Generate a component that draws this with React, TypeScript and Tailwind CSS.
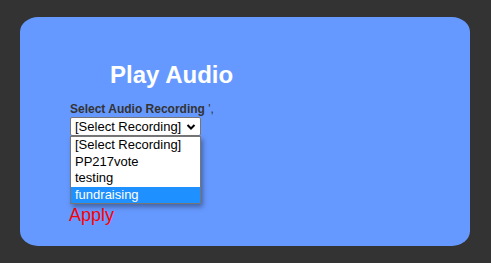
import React from "react";

export default function App() {
  const options = ["[Select Recording]", "PP217vote", "testing", "fundraising"];
  return (
    <div
      className="w-[491px] h-[263px] bg-[#333333] pt-[17px] pl-[20px]"
      style={{ fontFamily: '"Liberation Sans", Arial, sans-serif' }}
    >
      <div className="w-[450px] h-[229px] bg-[#6699ff] rounded-[18px/15px] pl-[50px] pt-[44px]">
        <h2 className="ml-[40px] text-[24px] leading-[28px] font-bold text-white">Play Audio</h2>
        <div className="mt-[13px] text-[12px] leading-[14px] text-[#333333]">
          <span className="font-bold">Select Audio Recording</span> &#39;,
        </div>
        <div className="relative mt-[1px] w-[131px]">
          <div className="h-[19px] w-[131px] bg-white border border-[#767676] rounded-[2px] flex items-center pl-[4px] text-[13px] text-black leading-[15px]">
            <span>[Select Recording]</span>
            <svg width="10" height="10" viewBox="0 0 10 10" className="ml-auto mr-[4px]">
              <path d="M1.5 3 L5 6.5 L8.5 3" fill="none" stroke="black" strokeWidth="2" />
            </svg>
          </div>
          <div className="absolute left-0 top-[19px] w-[131px] bg-white border border-[#767676] shadow-[2px_3px_5px_rgba(0,0,0,0.35)] z-10">
            {options.map((o, i) => (
              <div
                key={o}
                className={
                  "h-[16.5px] pl-[4px] text-[13px] leading-[16.5px] " +
                  (i === 3 ? "bg-[#1e90ff] text-white" : "text-black")
                }
              >
                {o}
              </div>
            ))}
          </div>
        </div>
        <div className="mt-[69px] -ml-[1px] text-[18px] leading-[21px] text-[#ff0000]">Apply</div>
      </div>
    </div>
  );
}
